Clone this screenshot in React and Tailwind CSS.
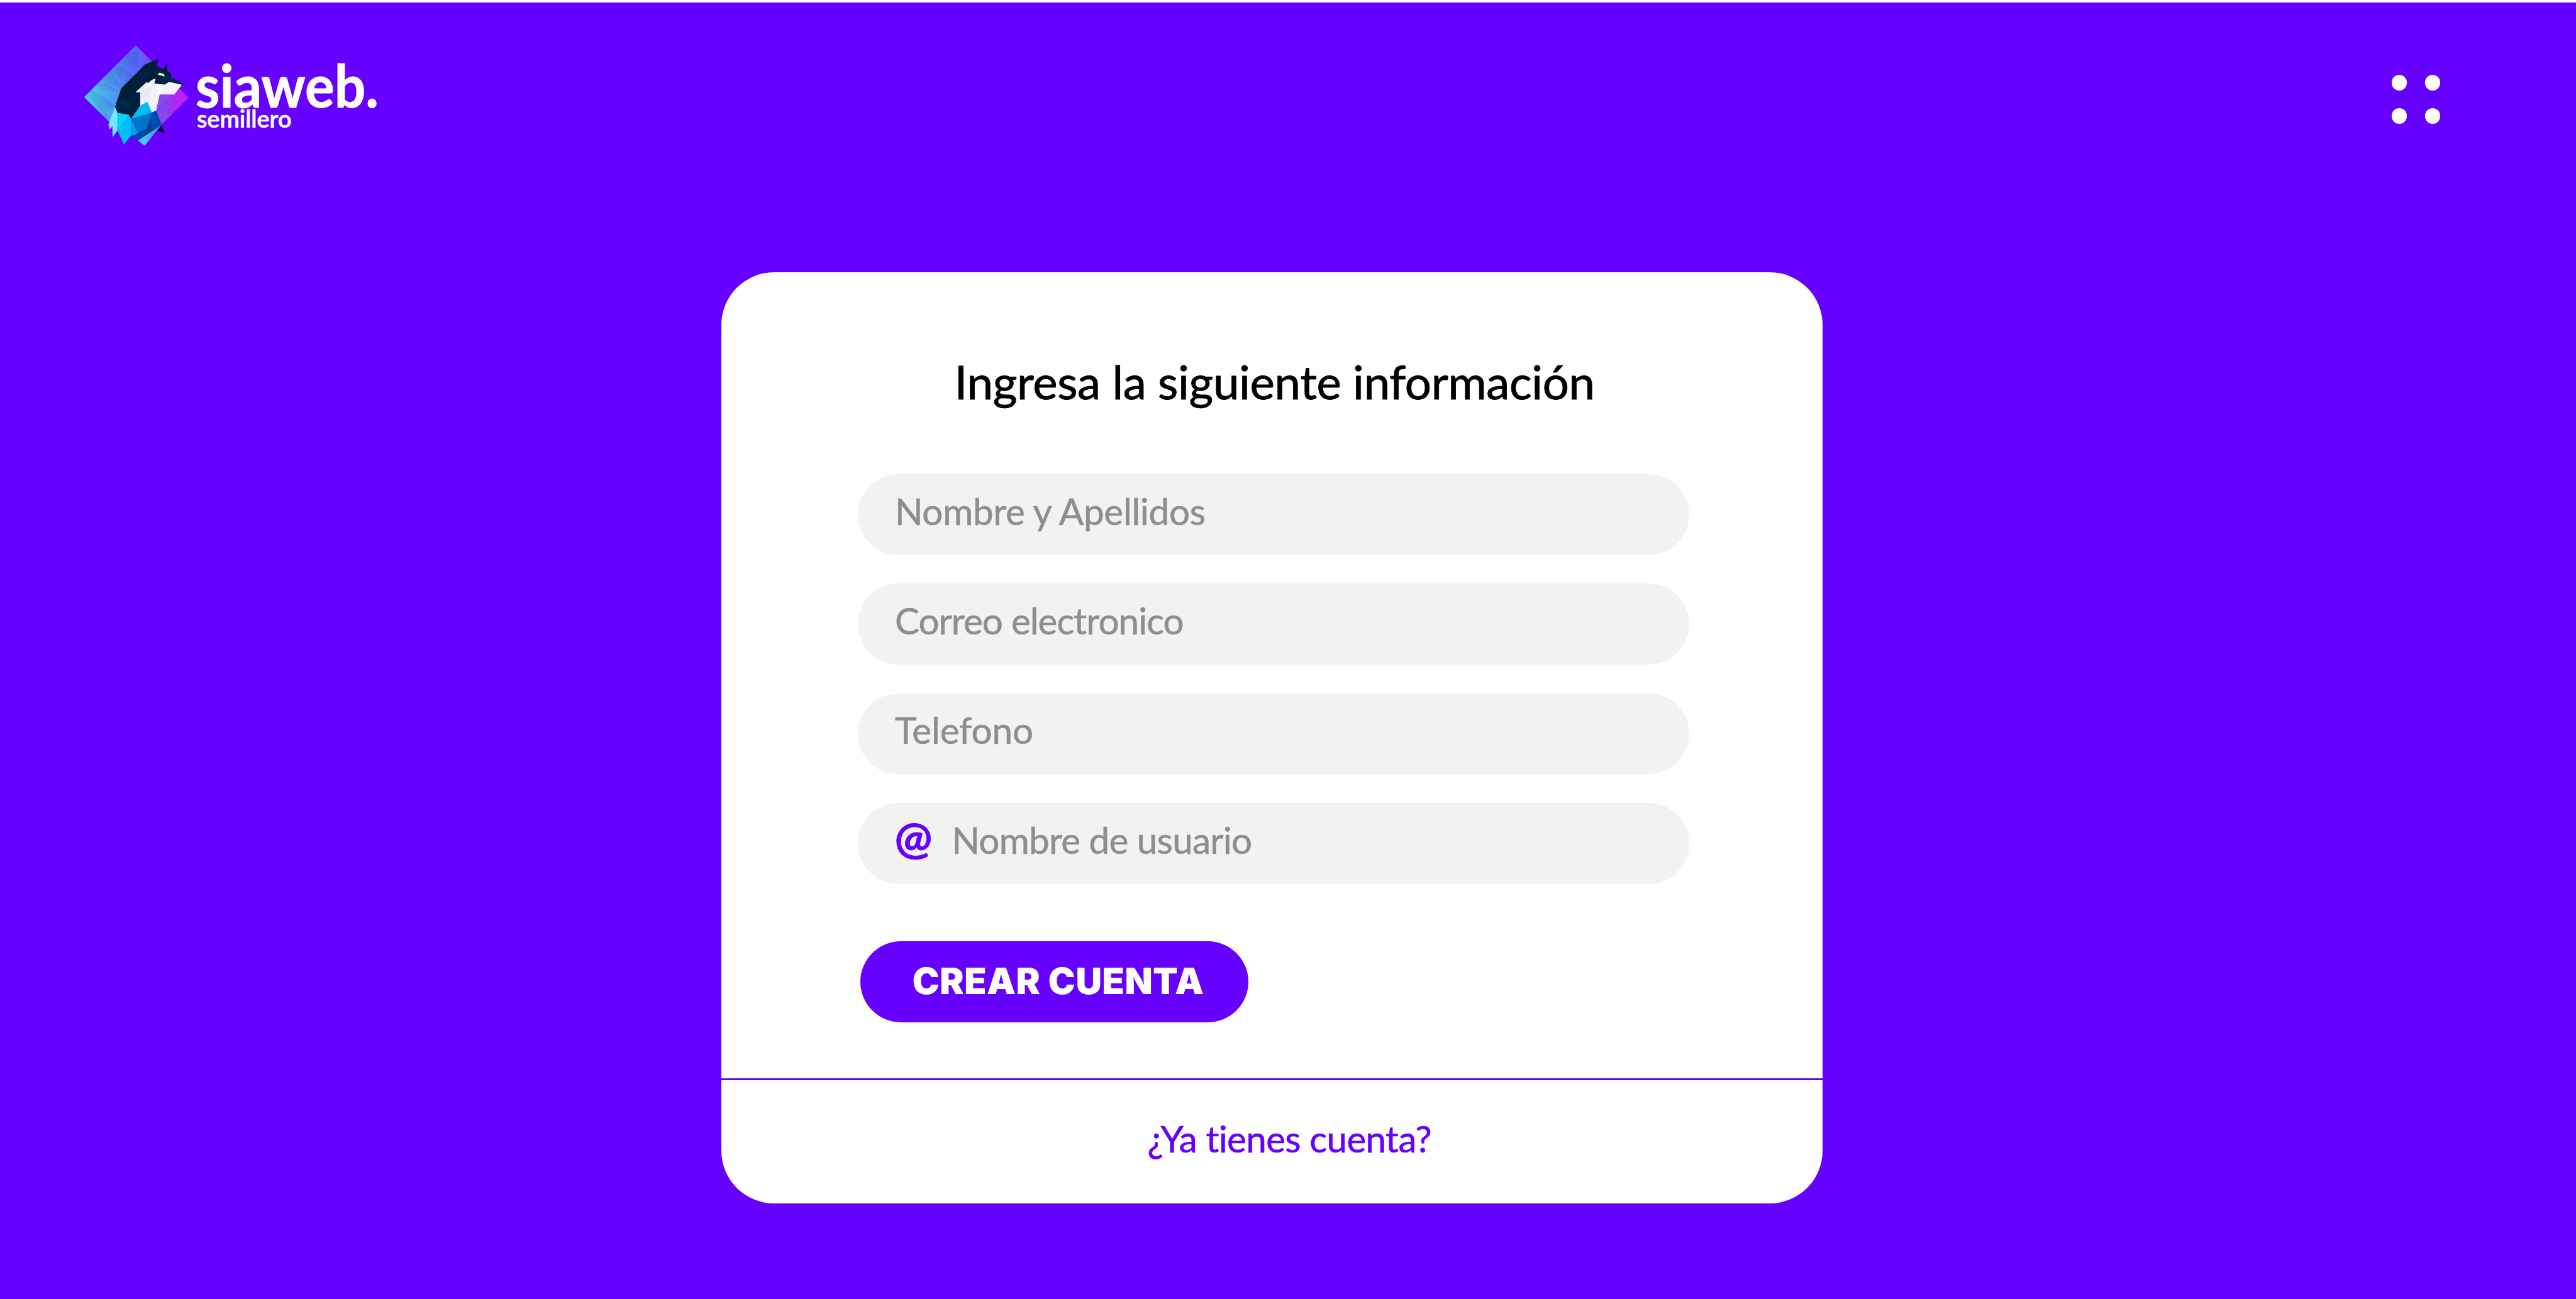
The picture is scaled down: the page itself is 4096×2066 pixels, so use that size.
function WolfLogo() {
  return (
    <svg viewBox="0 0 690 660" className="h-[184.1px] w-[192.5px] shrink-0" aria-hidden="true">
      <defs>
        <linearGradient id="diamond" gradientUnits="userSpaceOnUse" x1="60" y1="400" x2="655" y2="320">
          <stop offset="0" stopColor="#43e0e2" />
          <stop offset="0.18" stopColor="#4cb2ea" />
          <stop offset="0.38" stopColor="#5088f2" />
          <stop offset="0.56" stopColor="#5a63fc" />
          <stop offset="0.74" stopColor="#8344ee" />
          <stop offset="0.88" stopColor="#a82bee" />
          <stop offset="1" stopColor="#cc17fb" />
        </linearGradient>
        <linearGradient id="shade" x1="0" y1="1" x2="1" y2="0">
          <stop offset="0" stopColor="#2a3fb0" stopOpacity="0" />
          <stop offset="1" stopColor="#2a3fb0" stopOpacity="0.3" />
        </linearGradient>
        <linearGradient id="navy" x1="0" y1="0" x2="0" y2="1">
          <stop offset="0" stopColor="#002a5e" />
          <stop offset="1" stopColor="#001c30" />
        </linearGradient>
        <linearGradient id="navyUp" x1="0" y1="1" x2="1" y2="0">
          <stop offset="0" stopColor="#001a2c" />
          <stop offset="1" stopColor="#00254f" />
        </linearGradient>
        <linearGradient id="tip" x1="1" y1="0" x2="0.3" y2="1">
          <stop offset="0" stopColor="#4f7cf8" />
          <stop offset="1" stopColor="#4fd0ff" />
        </linearGradient>
      </defs>
      <polygon points="60,342 355,47 655,346 500,500 327,560 203,483" fill="url(#diamond)" />
      <g fill="url(#shade)">
        <polygon points="315,88 366,87 360,180" />
        <polygon points="245,163 315,88 360,180 287,172" />
        <polygon points="245,163 288,172 274,250 212,190" />
        <polygon points="288,172 345,222 272,293" />
        <polygon points="212,190 274,290 190,266 132,270" />
        <polygon points="132,270 190,266 262,308 140,309" />
        <polygon points="60,342 103,300 203,362 103,350" />
        <polygon points="103,350 205,362 236,398 186,424" />
        <polygon points="103,350 186,424 168,448" />
        <polygon points="168,448 186,424 203,483" />
      </g>
      <polygon points="605,293 655,346 574,327" fill="#c41df8" opacity="0.6" />
      <polygon points="491,327 574,327 480,400" fill="#8a4ee8" opacity="0.6" />
      <polygon points="574,327 655,346 557,443" fill="#c41df6" opacity="0.35" />
      <polygon points="472,418 557,443 500,500" fill="#8d48ee" opacity="0.8" />

      <polygon points="500,503 522,550 477,532" fill="#001c30" />
      <polygon points="501,498 405,620 366,588" fill="url(#tip)" />

      <polygon points="482,123 475,166 513,184 530,147 533,191 556,206 556,232 627,265 616,275 545,256 517,273 468,265 380,320 380,392 328,468 315,443 250,433 237,398 272,293 375,190 404,158" fill="#001e33" />
      <polygon points="404,158 482,123 470,170" fill="url(#navyUp)" />
      <polygon points="375,190 404,158 475,206 448,207" fill="url(#navyUp)" />
      <polygon points="375,190 448,207 395,262 272,293" fill="url(#navyUp)" />
      <polygon points="475,166 556,206 520,230 448,207" fill="#00213f" />
      <polygon points="468,238 556,232 627,265 616,275 545,256 517,273" fill="url(#navy)" />
      <polygon points="468,238 520,232 556,206 556,232 500,262" fill="#002447" />
      <polygon points="282,345 353,430 328,466 315,443 250,433 237,398" fill="url(#navy)" />
      <polygon points="272,293 395,262 353,315 282,345 237,398" fill="#001f36" />
      <polygon points="300,336 380,316 380,390 353,430 284,346" fill="url(#navyUp)" />

      <path d="M353 315 L417 256 L425 263 Q445 240 468 237 L460 264 L517 272 L545 255 L618 272 L574 327 L491 327 L470 420 L446 430 L420 370 L380 392 L380 315 Z" fill="#f4f4f8" />
      <polygon points="353,315 417,256 425,263 380,315" fill="#e4e6ec" />
      <polygon points="444,275 436,340 380,356 380,318" fill="#e9ebf0" />
      <polygon points="460,264 517,272 491,327" fill="#fbfbfd" />
      <g fill="none" stroke="#d3d6de" strokeWidth="1.2" strokeDasharray="6 2">
        <path d="M444 275 L380 315 M444 275 L436 340 L380 356 M455 340 H482 M436 340 L455 420 M444 275 L480 340 L458 424 M385 385 L436 340" />
        <path d="M545 256 L500 290 M545 256 L574 327 M572 262 V327" />
      </g>
      <polygon points="490,203 513,209 520,226 480,214" fill="#e9e9ea" />

      <polygon points="237,398 250,432 250,533 222,571 221,507 208,527 198,500 206,478" fill="#73e6ff" />
      <polygon points="250,432 315,443 250,533" fill="#00d5f8" />
      <polygon points="315,443 328,468 328,560 287,614 250,532" fill="#00bdf3" />
      <polygon points="420,370 447,431 328,467 378,392" fill="#00bdf3" />
      <polygon points="328,466 368,548 340,566 327,560" fill="#0a9be3" />
      <polygon points="328,466 447,430 428,488 414,530 368,550" fill="#0073cc" />
      <polygon points="342,560 420,518 500,500 368,590 328,561" fill="#004ab2" />
      <polygon points="447,430 470,418 502,500 456,530 428,488" fill="#004ab2" />
      <polygon points="429,484 457,530 404,564" fill="#004788" />
    </svg>
  );
}

function Field({ children, icon }) {
  return (
    <div className="flex h-[128.6px] w-[1322px] items-center rounded-full bg-[#f2f2f2] pb-[13.4px] pl-[59px] text-[58.4px] leading-none text-[#8e8e8e] [-webkit-text-stroke:0.6px_#8e8e8e]">
      <div className="flex h-[58px] items-baseline whitespace-nowrap leading-[58px]">
        {icon}
        {children}
      </div>
    </div>
  );
}

function Header() {
  return (
    <header className="flex h-[429px] items-start justify-between pl-[117.2px] pr-[215.7px]">
      <div className="flex pt-[54.6px]">
        <WolfLogo />
        <div className="ml-[1.4px] pt-[36px] text-white">
          <div className="origin-left scale-x-[0.93] text-[94px] font-bold leading-[80px] [-webkit-text-stroke:1px_white]">siaweb.</div>
          <div className="-mt-[5px] ml-[1.8px] text-[37.8px] font-semibold leading-[38px] [-webkit-text-stroke:0.6px_white]">semillero</div>
        </div>
      </div>
      <button aria-label="Menú" className="mt-[115.4px] grid grid-cols-2 gap-[28.5px]">
        <span className="size-[24.6px] rounded-full bg-white" />
        <span className="size-[24.6px] rounded-full bg-white" />
        <span className="size-[24.6px] rounded-full bg-white" />
        <span className="size-[24.6px] rounded-full bg-white" />
      </button>
    </header>
  );
}

export default function App() {
  return (
    <div className="h-[2066px] w-[4096px] overflow-hidden border-t-4 border-white bg-[#6600ff] font-['Lato',sans-serif]">
      <Header />
      <main className="ml-[1147.4px] flex h-[1481px] w-[1750.5px] flex-col rounded-[84px] bg-white">
        <form className="flex h-[1282px] flex-col items-start pl-[216.6px] pt-[128.4px]">
          <h1 className="ml-[153.5px] whitespace-nowrap text-[74.5px] leading-[90px] tracking-[-0.36px] text-black [-webkit-text-stroke:0.9px_black]">
            Ingresa la siguiente información
          </h1>
          <div className="mt-[102.7px] flex flex-col gap-[45.8px]">
            <Field>
              <span className="tracking-[-0.3px]">Nombre y Apellidos</span>
            </Field>
            <Field>
              <span className="tracking-[-0.97px]">Correo electronico</span>
            </Field>
            <Field>
              <span className="tracking-[-0.1px]">Telefono</span>
            </Field>
            <Field
              icon={
                <span className="w-[91px] -ml-[0.6px] text-[71px] font-bold leading-[47px] text-[#6600ff] [-webkit-text-stroke:0.8px_#6600ff]">@</span>
              }
            >
              <span className="tracking-[-0.74px]">Nombre de usuario</span>
            </Field>
          </div>
          <button
            type="button"
            className="ml-[4.2px] mt-[91px] flex h-[128.7px] w-[616.5px] items-center whitespace-nowrap rounded-full bg-[#6600ff] pl-[82.5px] font-['Inter',sans-serif] text-[57.5px] font-black leading-none tracking-[0.65px] text-white"
          >
            CREAR CUENTA
          </button>
        </form>
        <div className="h-[3px] bg-[#6600ff]" />
        <footer className="flex flex-1 items-center pb-[11.4px] pl-[677.2px]">
          <a className="whitespace-nowrap text-[58.4px] leading-none tracking-[-0.65px] text-[#6600ff] [-webkit-text-stroke:0.6px_#6600ff]">
            ¿Ya tienes cuenta?
          </a>
        </footer>
      </main>
    </div>
  );
}
